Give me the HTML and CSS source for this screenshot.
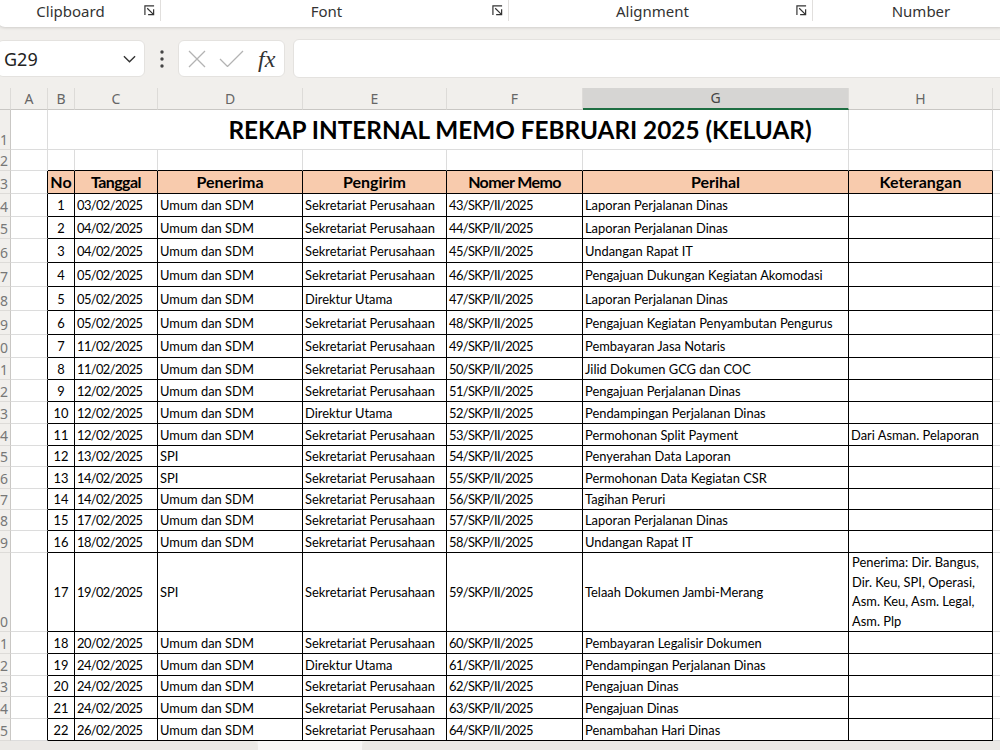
FILE: index.html
```html
<!DOCTYPE html>
<html lang="id">
<head>
    <meta charset="UTF-8">
    <title>Rekap Internal Memo Februari 2025</title>
    <link rel="stylesheet" href="styles.css">
</head>
<body>
    <!-- ribbon group captions -->
    <div class="ribbon">
        <div class="group g-clip">
            <span class="label">Clipboard</span>
            <svg class="launcher" viewBox="0 0 12 12"><path d="M1 11V1h10M3.5 3.5l6.5 6.5M4.5 10.5h6v-6"/></svg>
        </div>
        <div class="group g-font">
            <span class="label">Font</span>
            <svg class="launcher" viewBox="0 0 12 12"><path d="M1 11V1h10M3.5 3.5l6.5 6.5M4.5 10.5h6v-6"/></svg>
        </div>
        <div class="group g-align">
            <span class="label">Alignment</span>
            <svg class="launcher" viewBox="0 0 12 12"><path d="M1 11V1h10M3.5 3.5l6.5 6.5M4.5 10.5h6v-6"/></svg>
        </div>
        <div class="group g-num">
            <span class="label">Number</span>
        </div>
    </div>

    <!-- name box + formula bar -->
    <div class="formula-bar">
        <div class="name-box">
            <span>G29</span>
            <svg class="chevron" viewBox="0 0 14 8"><path d="M1 1l6 6 6-6"/></svg>
        </div>
        <div class="more">
            <svg viewBox="0 0 4 18"><circle cx="2" cy="2" r="1.7"/><circle cx="2" cy="9" r="1.7"/><circle cx="2" cy="16" r="1.7"/></svg>
        </div>
        <div class="fx-box">
            <svg class="ic-x" viewBox="0 0 18 18"><path d="M1 1l16 16M17 1L1 17"/></svg>
            <svg class="ic-ok" viewBox="0 0 25 17"><path d="M1 9l7.5 7.5L24 1"/></svg>
            <span class="fx">fx</span>
        </div>
        <div class="formula-input"></div>
    </div>

    <div class="sheet">
        <table class="grid">
            <colgroup>
                <col class="c-rh"><col class="c-a"><col class="c-b"><col class="c-c"><col class="c-d">
                <col class="c-e"><col class="c-f"><col class="c-g"><col class="c-h"><col class="c-i">
            </colgroup>
            <tr class="cols">
                <th class="corner"></th>
                <th>A</th><th>B</th><th>C</th><th>D</th><th>E</th><th>F</th><th class="sel">G</th><th>H</th><th></th>
            </tr>
            <tr class="r-title">
                <th class="rh">1</th>
                <td></td>
                <td colspan="6" class="title">REKAP INTERNAL MEMO FEBRUARI 2025 (KELUAR)</td>
                <td></td><td></td>
            </tr>
            <tr class="gap">
                <th class="rh">2</th>
                <td></td><td class="in"></td><td class="in"></td><td class="in"></td><td class="in"></td><td class="in"></td><td class="in"></td><td class="in"></td><td></td>
            </tr>
            <tr class="data head">
                <th class="rh">3</th>
                <td class="a"></td>
                <td>No</td><td>Tanggal</td><td>Penerima</td><td>Pengirim</td><td>Nomer Memo</td><td>Perihal</td><td>Keterangan</td>
                <td class="i"></td>
            </tr>
            <tr class="data h23"><th class="rh">4</th><td class="a"></td><td class="no">1</td><td>03/02/2025</td><td>Umum dan SDM</td><td>Sekretariat Perusahaan</td><td>43/SKP/II/2025</td><td>Laporan Perjalanan Dinas</td><td></td><td class="i"></td></tr>
            <tr class="data"><th class="rh">5</th><td class="a"></td><td class="no">2</td><td>04/02/2025</td><td>Umum dan SDM</td><td>Sekretariat Perusahaan</td><td>44/SKP/II/2025</td><td>Laporan Perjalanan Dinas</td><td></td><td class="i"></td></tr>
            <tr class="data h24"><th class="rh">6</th><td class="a"></td><td class="no">3</td><td>04/02/2025</td><td>Umum dan SDM</td><td>Sekretariat Perusahaan</td><td>45/SKP/II/2025</td><td>Undangan Rapat IT</td><td></td><td class="i"></td></tr>
            <tr class="data h24"><th class="rh">7</th><td class="a"></td><td class="no">4</td><td>05/02/2025</td><td>Umum dan SDM</td><td>Sekretariat Perusahaan</td><td>46/SKP/II/2025</td><td>Pengajuan Dukungan Kegiatan Akomodasi</td><td></td><td class="i"></td></tr>
            <tr class="data h24"><th class="rh">8</th><td class="a"></td><td class="no">5</td><td>05/02/2025</td><td>Umum dan SDM</td><td>Direktur Utama</td><td>47/SKP/II/2025</td><td>Laporan Perjalanan Dinas</td><td></td><td class="i"></td></tr>
            <tr class="data h24"><th class="rh">9</th><td class="a"></td><td class="no">6</td><td>05/02/2025</td><td>Umum dan SDM</td><td>Sekretariat Perusahaan</td><td>48/SKP/II/2025</td><td>Pengajuan Kegiatan Penyambutan Pengurus</td><td></td><td class="i"></td></tr>
            <tr class="data h23"><th class="rh">10</th><td class="a"></td><td class="no">7</td><td>11/02/2025</td><td>Umum dan SDM</td><td>Sekretariat Perusahaan</td><td>49/SKP/II/2025</td><td>Pembayaran Jasa Notaris</td><td></td><td class="i"></td></tr>
            <tr class="data"><th class="rh">11</th><td class="a"></td><td class="no">8</td><td>11/02/2025</td><td>Umum dan SDM</td><td>Sekretariat Perusahaan</td><td>50/SKP/II/2025</td><td>Jilid Dokumen GCG dan COC</td><td></td><td class="i"></td></tr>
            <tr class="data"><th class="rh">12</th><td class="a"></td><td class="no">9</td><td>12/02/2025</td><td>Umum dan SDM</td><td>Sekretariat Perusahaan</td><td>51/SKP/II/2025</td><td>Pengajuan Perjalanan Dinas</td><td></td><td class="i"></td></tr>
            <tr class="data"><th class="rh">13</th><td class="a"></td><td class="no">10</td><td>12/02/2025</td><td>Umum dan SDM</td><td>Direktur Utama</td><td>52/SKP/II/2025</td><td>Pendampingan Perjalanan Dinas</td><td></td><td class="i"></td></tr>
            <tr class="data"><th class="rh">14</th><td class="a"></td><td class="no">11</td><td>12/02/2025</td><td>Umum dan SDM</td><td>Sekretariat Perusahaan</td><td>53/SKP/II/2025</td><td>Permohonan Split Payment</td><td>Dari Asman. Pelaporan</td><td class="i"></td></tr>
            <tr class="data h21"><th class="rh">15</th><td class="a"></td><td class="no">12</td><td>13/02/2025</td><td>SPI</td><td>Sekretariat Perusahaan</td><td>54/SKP/II/2025</td><td>Penyerahan Data Laporan</td><td></td><td class="i"></td></tr>
            <tr class="data"><th class="rh">16</th><td class="a"></td><td class="no">13</td><td>14/02/2025</td><td>SPI</td><td>Sekretariat Perusahaan</td><td>55/SKP/II/2025</td><td>Permohonan Data Kegiatan CSR</td><td></td><td class="i"></td></tr>
            <tr class="data h21"><th class="rh">17</th><td class="a"></td><td class="no">14</td><td>14/02/2025</td><td>Umum dan SDM</td><td>Sekretariat Perusahaan</td><td>56/SKP/II/2025</td><td>Tagihan Peruri</td><td></td><td class="i"></td></tr>
            <tr class="data h21"><th class="rh">18</th><td class="a"></td><td class="no">15</td><td>17/02/2025</td><td>Umum dan SDM</td><td>Sekretariat Perusahaan</td><td>57/SKP/II/2025</td><td>Laporan Perjalanan Dinas</td><td></td><td class="i"></td></tr>
            <tr class="data"><th class="rh">19</th><td class="a"></td><td class="no">16</td><td>18/02/2025</td><td>Umum dan SDM</td><td>Sekretariat Perusahaan</td><td>58/SKP/II/2025</td><td>Undangan Rapat IT</td><td></td><td class="i"></td></tr>
            <tr class="data tall"><th class="rh">20</th><td class="a"></td><td class="no">17</td><td>19/02/2025</td><td>SPI</td><td>Sekretariat Perusahaan</td><td>59/SKP/II/2025</td><td>Telaah Dokumen Jambi-Merang</td><td class="wrap">Penerima: Dir. Bangus, Dir. Keu, SPI, Operasi, Asm. Keu, Asm. Legal, Asm. Plp</td><td class="i"></td></tr>
            <tr class="data"><th class="rh">21</th><td class="a"></td><td class="no">18</td><td>20/02/2025</td><td>Umum dan SDM</td><td>Sekretariat Perusahaan</td><td>60/SKP/II/2025</td><td>Pembayaran Legalisir Dokumen</td><td></td><td class="i"></td></tr>
            <tr class="data"><th class="rh">22</th><td class="a"></td><td class="no">19</td><td>24/02/2025</td><td>Umum dan SDM</td><td>Direktur Utama</td><td>61/SKP/II/2025</td><td>Pendampingan Perjalanan Dinas</td><td></td><td class="i"></td></tr>
            <tr class="data h21"><th class="rh">23</th><td class="a"></td><td class="no">20</td><td>24/02/2025</td><td>Umum dan SDM</td><td>Sekretariat Perusahaan</td><td>62/SKP/II/2025</td><td>Pengajuan Dinas</td><td></td><td class="i"></td></tr>
            <tr class="data"><th class="rh">24</th><td class="a"></td><td class="no">21</td><td>24/02/2025</td><td>Umum dan SDM</td><td>Sekretariat Perusahaan</td><td>63/SKP/II/2025</td><td>Pengajuan Dinas</td><td></td><td class="i"></td></tr>
            <tr class="data"><th class="rh">25</th><td class="a"></td><td class="no">22</td><td>26/02/2025</td><td>Umum dan SDM</td><td>Sekretariat Perusahaan</td><td>64/SKP/II/2025</td><td>Penambahan Hari Dinas</td><td></td><td class="i"></td></tr>
        </table>
    </div>

    <div class="tabs">
        <div class="tab-left"></div>
        <div class="tab-gap"></div>
        <div class="tab-right"></div>
    </div>
</body>
</html>
```

FILE: styles.css
```css
body {
    margin: 0;
    width: 1000px;
    height: 750px;
    overflow: hidden;
    background: #f1efec;
    font-family: 'Noto Sans', 'Open Sans', sans-serif;
    color: #242424;
}

/* ribbon captions */
.ribbon {
    display: flex;
    width: 1010px;
    height: 27px;
    margin-left: -3px;
    background: #fff;
    border-radius: 0 0 8px 8px;
    box-shadow: 0 1px 3px rgba(0, 0, 0, .14);
}

.group {
    flex-shrink: 0;
    display: flex;
    align-items: center;
    height: 21px;
    border-right: 1px solid #e1dfdd;
}

.group .label {
    flex: 1;
    text-align: center;
    font-size: 15px;
    color: #333;
}

.g-clip { width: 163px; }
.g-font { width: 347px; }
.g-align { width: 303px; }
.g-num { width: 216px; border-right: none; }

.launcher {
    width: 11px;
    height: 11px;
    margin-right: 5px;
    fill: none;
    stroke: #333;
    stroke-width: 1.3;
}

/* formula bar */
.formula-bar {
    display: flex;
    align-items: center;
    height: 37px;
    margin-top: 13px;
}

.name-box {
    box-sizing: border-box;
    width: 148px;
    height: 37px;
    margin-left: -3px;
    padding: 0 8px 0 6px;
    display: flex;
    align-items: center;
    justify-content: space-between;
    background: #fff;
    border: 1px solid #e4e2df;
    border-radius: 6px;
    font-size: 18px;
    color: #222;
}

.chevron {
    width: 13px;
    height: 8px;
    fill: none;
    stroke: #333;
    stroke-width: 1.5;
}

.more {
    width: 33px;
    display: flex;
    justify-content: center;
}

.more svg {
    width: 4px;
    height: 18px;
    fill: #444;
}

.fx-box {
    box-sizing: border-box;
    width: 107px;
    height: 37px;
    padding-left: 9px;
    display: flex;
    align-items: center;
    background: #fff;
    border: 1px solid #e4e2df;
    border-radius: 6px;
}

.ic-x {
    width: 18px;
    height: 18px;
    fill: none;
    stroke: #b3b3b3;
    stroke-width: 1.3;
}

.ic-ok {
    width: 25px;
    height: 17px;
    margin-left: 13px;
    fill: none;
    stroke: #b3b3b3;
    stroke-width: 1.3;
}

.fx {
    margin-left: 14px;
    font-family: 'Liberation Serif', serif;
    font-style: italic;
    font-size: 24px;
    color: #333;
    line-height: 1;
}

.formula-input {
    flex: 1;
    height: 37px;
    margin-left: 8px;
    margin-right: -10px;
    background: #fff;
    border: 1px solid #e4e2df;
    border-radius: 6px;
}

/* worksheet */
.sheet {
    height: 653px;
    margin-top: 11px;
    overflow: hidden;
    background: #fff;
}

.grid {
    width: 1053px;
    table-layout: fixed;
    border-collapse: separate;
    border-spacing: 0;
    font-family: 'Lato', 'Liberation Sans', sans-serif;
    font-size: 12.9px;
    line-height: 16px;
    color: #000;
}

.c-rh { width: 11px; }
.c-a { width: 37px; }
.c-b { width: 27px; }
.c-c { width: 83px; }
.c-d { width: 145px; }
.c-e { width: 144px; }
.c-f { width: 136px; }
.c-g { width: 266px; }
.c-h { width: 144px; }
.c-i { width: 60px; }

/* each cell draws only its right and bottom line */
.grid td,
.grid th {
    box-sizing: border-box;
    border: 0;
    border-right: 1px solid #dcdcdc;
    border-bottom: 1px solid #dcdcdc;
}

.grid td {
    height: 22px;
    padding: 0 2px;
    white-space: nowrap;
    overflow: hidden;
    vertical-align: middle;
}

.grid tr.cols th {
    height: 22px;
    padding: 0;
    background: #f1efec;
    border-right-color: #dddbd8;
    border-bottom-color: #c9c7c4;
    font-family: 'Noto Sans', sans-serif;
    font-weight: normal;
    font-size: 14px;
    color: #666;
}

.grid tr.cols th.sel {
    background: #d6d5d3;
    border-bottom: 2px solid #1e6e42;
    color: #444;
}

.grid th.corner {
    background: #e2e0dd;
}

/* row numbers, clipped on the left edge */
.grid th.rh {
    padding: 0 3px 2px 0;
    direction: rtl;
    text-align: right;
    vertical-align: bottom;
    overflow: hidden;
    white-space: nowrap;
    background: #f1efec;
    border-right-color: #c9c7c4;
    border-bottom-color: #dddbd8;
    font-family: 'Noto Sans', sans-serif;
    font-weight: normal;
    font-size: 14px;
    line-height: 15px;
    color: #777;
}

.grid tr.r-title td { height: 40px; }

.grid td.title {
    padding-left: 146px;
    text-align: center;
    font-weight: bold;
    font-size: 24.3px;
    line-height: 30px;
    overflow: visible;
}

.grid tr.gap td { height: 21px; }
.grid tr.gap td.in { border-bottom-color: #000; }

/* bordered memo table */
.grid tr.data td {
    border-right-color: #000;
    border-bottom-color: #000;
}

.grid tr.data td.a {
    border-bottom-color: #dcdcdc;
}

.grid tr.data td.i {
    border-right-color: #dcdcdc;
    border-bottom-color: #dcdcdc;
}

.grid tr.data td:nth-child(4),
.grid tr.data td:nth-child(7) {
    letter-spacing: -0.6px;
}

.grid tr.head td {
    height: 23px;
    background: #f8cbad;
    font-weight: bold;
    font-size: 16px;
    text-align: center;
    letter-spacing: 0;
}

.grid tr.head td.a,
.grid tr.head td.i {
    background: #fff;
}

.grid tr.h21 td { height: 21px; }
.grid tr.h23 td { height: 23px; }
.grid tr.h24 td { height: 24px; }
.grid tr.tall td { height: 79px; }

.grid td.no {
    text-align: center;
}

.grid td.wrap {
    white-space: normal;
    line-height: 19.5px;
    padding: 0 3px;
}

/* sheet tab strip */
.tabs {
    display: flex;
    height: 9px;
    background: #f1efec;
}

.tab-left {
    width: 258px;
    background: #ebe9e6;
    border-radius: 0 6px 0 0;
}

.tab-gap {
    width: 104px;
    background: #f8f7f6;
}

.tab-right {
    flex: 1;
    background: #ebe9e6;
    border-radius: 6px 0 0 0;
}
```
